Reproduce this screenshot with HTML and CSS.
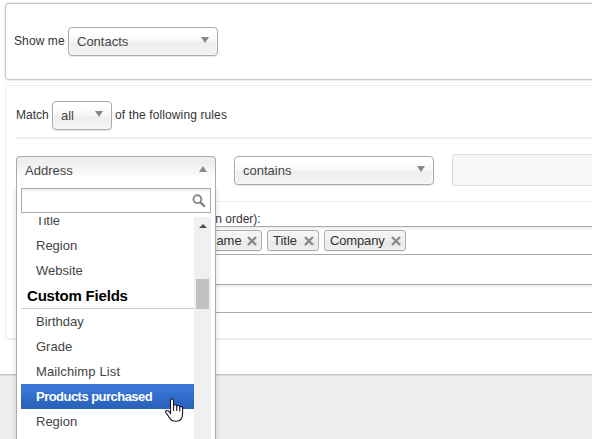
FILE: index.html
```html
<!DOCTYPE html>
<html lang="en">
<head>
<meta charset="utf-8">
<title>Contacts filter</title>
<link rel="stylesheet" href="styles.css">
</head>
<body>
<main class="page">
  <section class="panel panel-show">
    <span class="show-label">Show me</span>
    <div class="select select-contacts"><span>Contacts</span><i class="arrow"></i></div>
  </section>
  <section class="panel panel-rules">
    <div class="match">
      <span class="match-label">Match</span>
      <div class="select select-all"><span>all</span><i class="arrow"></i></div>
      <span class="rules-label">of the following rules</span>
    </div>
    <div class="rule">
      <div class="field">
        <div class="select select-open"><span>Address</span><i class="arrow arrow-up"></i></div>
        <div class="drop">
          <div class="search">
            <svg width="14" height="14" viewBox="0 0 14 14"><circle cx="5.4" cy="5.2" r="3.9" fill="none" stroke="#888" stroke-width="1.9"/><path d="M8.2 8.2L12.8 12.6" stroke="#888" stroke-width="2.5"/></svg>
          </div>
          <div class="results">
            <ul class="list">
              <li>Title</li>
              <li>Region</li>
              <li>Website</li>
              <li class="group">Custom Fields</li>
              <li>Birthday</li>
              <li>Grade</li>
              <li class="wide">Mailchimp List</li>
              <li class="active">Products purchased</li>
              <li>Region</li>
            </ul>
            <div class="scrollbar"><i class="scroll-up"></i><i class="thumb"></i></div>
          </div>
        </div>
      </div>
      <div class="select select-op"><span>contains</span><i class="arrow"></i></div>
      <div class="disabled"></div>
    </div>
    <div class="columns">
      <div class="columns-label">Columns (in order):</div>
      <div class="box tags">
        <div class="tag tag-name"><span>Name</span><svg width="10" height="10" viewBox="0 0 10 10"><path d="M1 1L9 9M9 1L1 9"/></svg></div>
        <div class="tag tag-title"><span>Title</span><svg width="10" height="10" viewBox="0 0 10 10"><path d="M1 1L9 9M9 1L1 9"/></svg></div>
        <div class="tag tag-company"><span>Company</span><svg width="10" height="10" viewBox="0 0 10 10"><path d="M1 1L9 9M9 1L1 9"/></svg></div>
      </div>
      <div class="box box-second"></div>
    </div>
  </section>
</main>
<svg class="cursor" width="19" height="25" viewBox="0 0 19 25"><path d="M5.5 15.5V2.7C5.5 .2 8.5 .2 8.5 2.7V7.7C9.3 6.3 11.4 6.5 11.7 8.1C12.7 7.1 14.4 7.5 14.7 8.8C16 8 17.6 8.7 17.6 10.1V15.5C17.6 20.7 15 23.3 11 23.3C7.5 23.3 5.2 21.5 3.6 18.4L.9 14.7C-.1 13.1 1.9 11.7 3.5 13L5.5 15.5Z" fill="#fff" stroke="#15152b" stroke-width="1.1"/><path d="M8.5 7.5V13M11.7 8.3V13M14.7 9V13.4" fill="none" stroke="#15152b" stroke-width="1.1"/></svg>
</body>
</html>
```
FILE: styles.css
```css
* { box-sizing: border-box; }
body {
  margin: 0;
  height: 439px;
  overflow: hidden;
  background: #ededed;
  color: #333;
  font: 12px/16px "Liberation Sans", Arial, sans-serif;
}
.page {
  height: 376px;
  padding: 3px 0 0 5px;
  background: #fff;
  border-bottom: 1px solid #d8d8d8;
  box-shadow: inset 0 -1px #c8c8c8;
}
.panel { border: 1px solid #c8c8c8; border-right: 0; border-radius: 4px 0 0 4px; }
.panel-show {
  height: 77px;
  display: flex;
  align-items: center;
  padding-left: 8px;
  box-shadow: 0 0 0 1px #eee;
}
.show-label { width: 54px; letter-spacing: .1px; }
.panel-show .show-label { margin-top: -2px; }
.panel-rules {
  height: 255px;
  margin-top: 5px;
  padding: 15px 0 0 10px;
  border-color: #eee;
  border-bottom-width: 2px;
}
.match {
  height: 38px;
  display: flex;
  align-items: flex-start;
  border-bottom: 2px solid #eee;
}
.match-label { width: 36px; }
.match-label, .rules-label { padding-top: 6px; }
.rules-label { margin-left: 3px; white-space: nowrap; letter-spacing: .12px; }
.select {
  height: 29px;
  padding: 0 8px;
  display: flex;
  align-items: center;
  justify-content: space-between;
  border: 1px solid #aaa;
  border-radius: 4px;
  background: linear-gradient(#fff 20%, #f6f6f6 50%, #eee 52%, #f4f4f4);
  box-shadow: inset 0 0 3px #fff, 0 1px 1px rgba(0,0,0,.1);
  color: #444;
  font-size: 13px;
}
.select-contacts { width: 150px; }
.select-all { width: 60px; }
.select-open {
  width: 200px;
  border-bottom: 0;
  border-radius: 4px 4px 0 0;
  background: linear-gradient(#eee 20%, #fff 80%);
  box-shadow: none;
}
.select-op { width: 200px; margin: 2px 18px 0; }
.arrow {
  border: solid transparent;
  border-width: 6px 4px 0;
  border-top-color: #888;
  margin-bottom: 4px;
}
.arrow-up { border-width: 0 4px 6px; border-bottom-color: #888; }
.rule {
  height: 63px;
  display: flex;
  align-items: flex-start;
  padding-top: 15px;
  border-bottom: 1px solid #eee;
}
.field { position: relative; margin-top: 2px; }
.drop {
  position: absolute;
  z-index: 2;
  top: 28px;
  left: 0;
  width: 200px;
  height: 270px;
  padding: 4px 4px 0;
  background: #fff;
  border: 1px solid #aaa;
  border-top: 0;
  box-shadow: 0 4px 5px rgba(0,0,0,.15);
}
.search {
  height: 25px;
  display: flex;
  align-items: center;
  justify-content: flex-end;
  padding-right: 4px;
  border: 1px solid #aaa;
  background: linear-gradient(#eee 1%, #fff 15%);
}
.results { height: 240px; margin-top: 4px; display: flex; overflow: hidden; }
.list { flex: 1; margin: -9px 0 0; padding: 0; list-style: none; }
.list li {
  height: 25px;
  padding-left: 15px;
  color: #444;
  font-size: 13px;
  line-height: 25px;
  white-space: nowrap;
}
.list .wide { letter-spacing: .13px; }
.list .group {
  height: 26px;
  padding-left: 6px;
  border-bottom: 1px solid #ccc;
  color: #000;
  font-size: 15px;
  font-weight: bold;
  letter-spacing: -.2px;
}
.list .active {
  background: linear-gradient(#3875d7 20%, #2a62bc 90%);
  color: #fff;
  font-weight: bold;
  letter-spacing: -.53px;
}
.scrollbar {
  width: 17px;
  display: flex;
  flex-direction: column;
  align-items: center;
  background: #f0f0f0;
}
.scroll-up { margin-top: 7px; border: solid transparent; border-width: 0 4px 4px; border-bottom-color: #505050; }
.thumb { width: 13px; height: 30px; margin-top: 51px; background: #c1c1c1; }
.disabled {
  flex: 1;
  height: 32px;
  border: 1px solid #ddd;
  border-right: 0;
  border-radius: 4px 0 0 4px;
  background: #f7f7f7;
}
.columns-label { padding: 9px 0 0 142px; height: 24px; white-space: nowrap; }
.box {
  height: 29px;
  border: 1px solid #aaa;
  border-right: 0;
  background: linear-gradient(#eee 1%, #fff 15%);
}
.tags { display: flex; gap: 5px; padding: 3px 0 0 184px; }
.tag {
  height: 21px;
  padding: 0 4px 0 5px;
  display: flex;
  align-items: center;
  justify-content: space-between;
  border: 1px solid #aaa;
  border-radius: 3px;
  background: linear-gradient(#f4f4f4 20%, #f0f0f0 50%, #e8e8e8 52%, #eee);
  box-shadow: 0 0 2px #fff inset, 0 1px 0 rgba(0,0,0,.05);
  font-size: 13px;
}
.tag svg { fill: none; stroke: #888; stroke-width: 2.3; }
.tag-name { width: 61px; }
.tag-title { width: 52px; }
.tag-company { width: 82px; }
.tag-company span { letter-spacing: -.15px; }
.box-second { margin-top: 29px; }
.cursor { position: absolute; z-index: 3; left: 165px; top: 398px; }
```
